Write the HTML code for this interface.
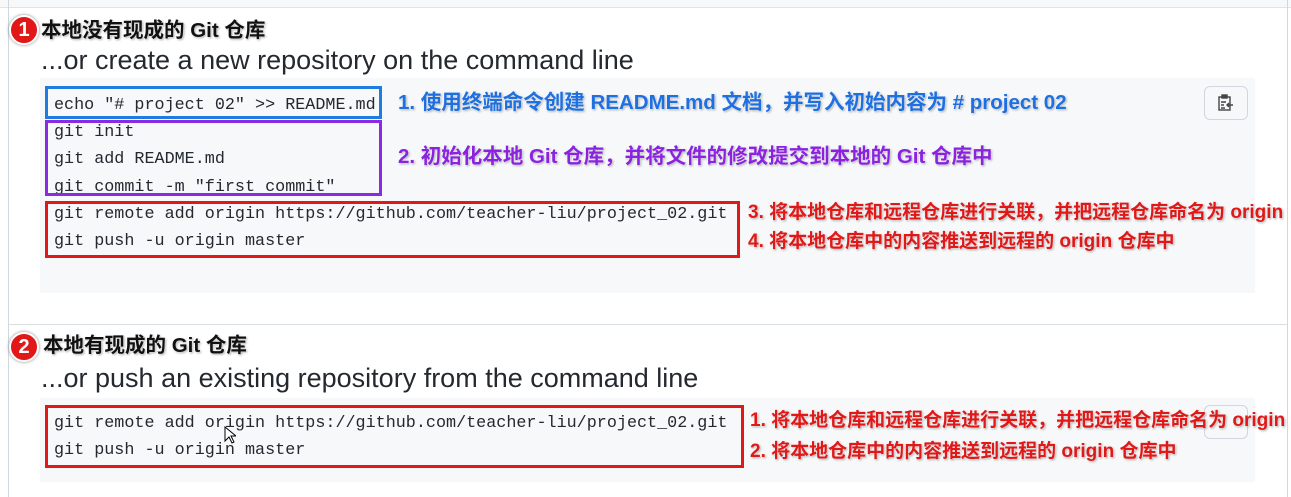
<!DOCTYPE html>
<html><head><meta charset="utf-8"><style>
body{margin:0;width:1291px;height:497px;background:#fff;position:relative;overflow:hidden;font-family:"Liberation Sans","Noto Sans CJK SC",sans-serif}
.a{position:absolute}
.mono{font-family:"Liberation Mono",monospace;font-size:16.75px;color:#24292f;white-space:pre;line-height:27.2px}
.h{font-size:27px;color:#24292f;white-space:nowrap;line-height:30px}
.t{font-weight:bold;font-size:19px;white-space:nowrap;line-height:24px;text-shadow:0 0 2px #fff,1px 1px 2px #999}
.badge{width:26px;height:26px;border-radius:50%;background:#e01818;border:2px solid #fff;box-shadow:0 0 3px #888;color:#fff;font-weight:bold;font-size:20px;text-align:center;line-height:26px}
.box{border:3px solid;box-sizing:border-box}
</style></head><body>
<div class="a" style="left:0;top:0;width:1291px;height:7px;background:#f6f8fa;border-bottom:1px solid #e1e4e8"></div>
<div class="a" style="left:8px;top:0;width:1px;height:497px;background:#d0d7de"></div>
<div class="a" style="left:1287px;top:0;width:1px;height:497px;background:#d0d7de"></div>
<div class="a" style="left:8px;top:324px;width:1280px;height:1px;background:#d8dee4"></div>
<div class="a" style="left:40px;top:78px;width:1215px;height:215px;background:#f6f8fa"></div>
<div class="a" style="left:40px;top:398px;width:1215px;height:84px;background:#f6f8fa"></div>
<div class="a" style="left:1204px;top:86px;width:44px;height:34px;border:1px solid #d0d7de;border-radius:6px;background:#f6f8fa;box-sizing:border-box"></div>
<svg class="a" style="left:1217px;top:94px" width="18" height="18" viewBox="0 0 18 18" fill="none" stroke="#444" stroke-width="1.4"><rect x="2" y="3" width="11" height="13"/><rect x="5" y="1" width="5" height="3" fill="#444"/><path d="M4 8h5M4 11h3M4 14h4M16 11h-6M12 9l-2 2 2 2"/></svg>
<div class="a" style="left:1204px;top:405px;width:44px;height:34px;border:1px solid #d0d7de;border-radius:6px;background:#f6f8fa;box-sizing:border-box"></div>

<div class="a badge" style="left:9px;top:15px">1</div>
<div class="a t" style="left:41px;top:19px;color:#111;font-size:20.5px">本地没有现成的 Git 仓库</div>
<div class="a h" style="left:41px;top:45px">...or create a new repository on the command line</div>
<div class="a mono" style="left:54px;top:92px">echo "# project 02" &gt;&gt; README.md
git init
git add README.md
git commit -m "first commit"
git remote add origin https://github.com/teacher-liu/project_02.git
git push -u origin master</div>
<div class="a box" style="left:45px;top:86px;width:337px;height:33px;border-color:#1e7be0"></div>
<div class="a box" style="left:45px;top:120px;width:337px;height:76px;border-color:#8a2be2"></div>
<div class="a box" style="left:45px;top:201px;width:695px;height:57px;border-color:#e01818"></div>
<div class="a t" style="left:398px;top:91px;color:#1e6fe0;font-size:20.5px">1. 使用终端命令创建 README.md 文档，并写入初始内容为 # project 02</div>
<div class="a t" style="left:398px;top:145px;color:#8a22e0;font-size:20.5px">2. 初始化本地 Git 仓库，并将文件的修改提交到本地的 Git 仓库中</div>
<div class="a t" style="left:748px;top:201px;color:#e01818">3. 将本地仓库和远程仓库进行关联，并把远程仓库命名为 origin</div>
<div class="a t" style="left:748px;top:230px;color:#e01818">4. 将本地仓库中的内容推送到远程的 origin 仓库中</div>

<div class="a badge" style="left:9px;top:332px">2</div>
<div class="a t" style="left:43px;top:334px;color:#111;font-size:20.5px">本地有现成的 Git 仓库</div>
<div class="a h" style="left:41px;top:363px">...or push an existing repository from the command line</div>
<div class="a mono" style="left:54px;top:410px">git remote add origin https://github.com/teacher-liu/project_02.git
git push -u origin master</div>
<div class="a box" style="left:45px;top:405px;width:699px;height:63px;border-color:#e01818"></div>
<div class="a t" style="left:750px;top:409px;color:#e01818">1. 将本地仓库和远程仓库进行关联，并把远程仓库命名为 origin</div>
<div class="a t" style="left:750px;top:440px;color:#e01818">2. 将本地仓库中的内容推送到远程的 origin 仓库中</div>
<svg class="a" style="left:224px;top:426px" width="12" height="18" viewBox="0 0 12 18"><path d="M1 1v14l4-4 3 6 2-1-3-6h5z" fill="#fff" stroke="#000"/></svg>
</body></html>
